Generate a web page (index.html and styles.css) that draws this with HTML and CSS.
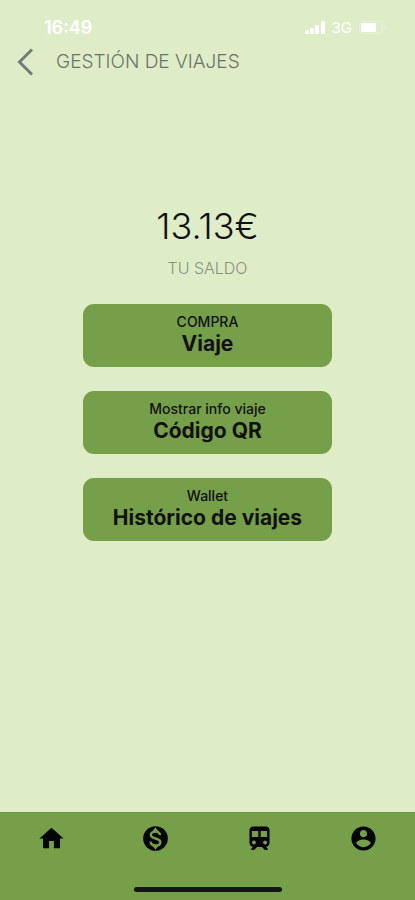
FILE: index.html
```html
<!DOCTYPE html>
<html lang="es">
<head>
<meta charset="utf-8">
<meta name="viewport" content="width=device-width, initial-scale=1">
<title>Gestión de viajes</title>
<link rel="stylesheet" href="styles.css">
</head>
<body>
<div class="screen">
  <div class="status">
    <span class="time">16:49</span>
    <div class="signals">
      <svg class="bars" viewBox="0 0 20 14" aria-hidden="true"><rect x="0" y="9" width="4" height="4" rx="1"/><rect x="5" y="7" width="4" height="6" rx="1"/><rect x="10" y="4" width="4" height="9" rx="1"/><rect x="16" y="0" width="4" height="13" rx="1"/></svg>
      <span class="network">3G</span>
      <svg class="battery" viewBox="0 0 28 14" aria-hidden="true"><rect class="shell" x="0.5" y="0.5" width="23" height="12" rx="3"/><rect x="2" y="2" width="15" height="9" rx="1"/><path class="cap" d="M25.500 4.500v4q1.500-.5 1.500-2t-1.500-2z"/></svg>
    </div>
  </div>
  <header class="header">
    <button class="back" type="button" aria-label="Volver"><svg viewBox="0 0 18 28" aria-hidden="true"><path d="M16 1.500 3.500 14 16 26.500"/></svg></button>
    <h1 class="title">GESTIÓN DE VIAJES</h1>
  </header>
  <main class="content">
    <p class="balance">13.13€</p>
    <p class="caption">TU SALDO</p>
    <div class="actions">
      <button class="action" type="button"><span class="hint">COMPRA</span><span class="name">Viaje</span></button>
      <button class="action" type="button"><span class="hint">Mostrar info viaje</span><span class="name">Código QR</span></button>
      <button class="action" type="button"><span class="hint">Wallet</span><span class="name">Histórico de viajes</span></button>
    </div>
  </main>
  <footer class="footer">
    <nav class="tabs">
      <a class="tab" href="#inicio" aria-label="Inicio"><svg viewBox="0 0 24 24"><path d="M10 20v-6h4v6h5v-8h3L12 3 2 12h3v8z"/></svg></a>
      <a class="tab" href="#saldo" aria-label="Saldo"><svg viewBox="0 0 24 24"><circle cx="12" cy="12" r="10.200"/><path class="sign" d="M15.800 9.300C15.600 7.400 14.200 6.300 12 6.300c-2.200 0-3.800 1.100-3.800 2.800 0 3.700 7.800 2.100 7.800 5.900 0 1.700-1.600 2.800-4 2.800-2.300 0-3.900-1.200-4.100-3.200"/><path class="tip" d="M12 2.800 14.600 6H9.400zM12 21.200 9.400 18h5.200z"/></svg></a>
      <a class="tab" href="#viajes" aria-label="Viajes"><svg viewBox="0 0 24 24"><path fill-rule="evenodd" d="M7 2h10c2 0 3.300 1.200 3.300 3.200v10.300c0 1.800-1.200 3.200-3 3.400l1.500 1.600v1h-2.300L14 19h-4l-2.500 2.500H5.200v-1l1.500-1.600c-1.800-.2-3-1.600-3-3.400V5.200C3.700 3.200 5 2 7 2zM5.700 5.800v5H11v-5zM13 5.800v5h5.300v-5zM7.400 13.700a1.600 1.600 0 1 0 0 3.200 1.600 1.600 0 0 0 0-3.200zM16.600 13.700a1.600 1.600 0 1 0 0 3.200 1.600 1.600 0 0 0 0-3.200z"/></svg></a>
      <a class="tab" href="#perfil" aria-label="Perfil"><svg viewBox="0 0 24 24"><path d="M12 2C6.480 2 2 6.480 2 12s4.480 10 10 10 10-4.480 10-10S17.520 2 12 2zm0 3c1.660 0 3 1.340 3 3s-1.340 3-3 3-3-1.340-3-3 1.340-3 3-3zm0 14.200c-2.500 0-4.710-1.280-6-3.220.03-1.990 4-3.080 6-3.080 1.990 0 5.970 1.090 6 3.080-1.290 1.940-3.500 3.220-6 3.220z"/></svg></a>
    </nav>
    <div class="home-bar"></div>
  </footer>
</div>
</body>
</html>
```
FILE: styles.css
```css
* { box-sizing: border-box; }

body {
  margin: 0;
  background: #deecc8;
  color: #111;
  font-family: Inter, "Liberation Sans", sans-serif;
}

.screen {
  display: flex;
  flex-direction: column;
  min-height: 100vh;
}

.status {
  display: flex;
  justify-content: space-between;
  align-items: center;
  padding: 18px 28px 0 44px;
  line-height: 20px;
  color: #fff;
}

.time { font-size: 18px; font-weight: 600; }

.signals { display: flex; align-items: center; gap: 7px; }
.signals svg { fill: #fff; display: block; }
.bars { width: 20px; height: 14px; }
.network { font-size: 15px; }
.battery { width: 28px; height: 14px; }
.battery .shell { fill: none; stroke: #fff; stroke-opacity: .3; }
.battery .cap { fill-opacity: .4; }

.header {
  display: flex;
  align-items: center;
  gap: 22px;
  padding: 10px 16px 0;
}

.back {
  padding: 0;
  border: 0;
  background: none;
}
.back svg {
  display: block;
  width: 18px;
  height: 28px;
  fill: none;
  stroke: #747b7a;
  stroke-width: 3;
}

.title {
  margin: 0;
  font-size: 19px;
  font-weight: 300;
  line-height: 28px;
  color: #6c7569;
}

.content {
  flex: 1;
  padding-top: 126px;
  text-align: center;
}

.balance {
  margin: 0;
  font-size: 36px;
  font-weight: 300;
  line-height: 48px;
}

.caption {
  margin: 6px 0 0;
  font-size: 16px;
  font-weight: 300;
  line-height: 24px;
  color: #879180;
}

.actions {
  display: flex;
  flex-direction: column;
  gap: 24px;
  width: 60%;
  margin: 24px auto;
}

.action {
  display: flex;
  flex-direction: column;
  align-items: center;
  padding: 9px 8px 10px;
  border: 0;
  border-radius: 11px;
  background: #759f48;
  color: #111;
  font-family: inherit;
}

.hint { font-size: 14px; font-weight: 500; line-height: 18px; }
.name { font-size: 21px; font-weight: 650; line-height: 26px; }

.footer {
  padding: 11px 0 8px;
  border-top: 1px solid #6c9540;
  background: #759f48;
}

.tabs { display: grid; grid-template-columns: repeat(4, 1fr); }
.tab { display: flex; justify-content: center; color: #050505; }
.tab svg { width: 29px; height: 29px; fill: currentColor; }
.tab .sign { fill: none; stroke: #759f48; stroke-width: 2; }
.tab .tip { fill: #759f48; }

.home-bar {
  width: 148px;
  height: 5px;
  margin: 34px auto 0;
  border-radius: 3px;
  background: #151617;
}
```
